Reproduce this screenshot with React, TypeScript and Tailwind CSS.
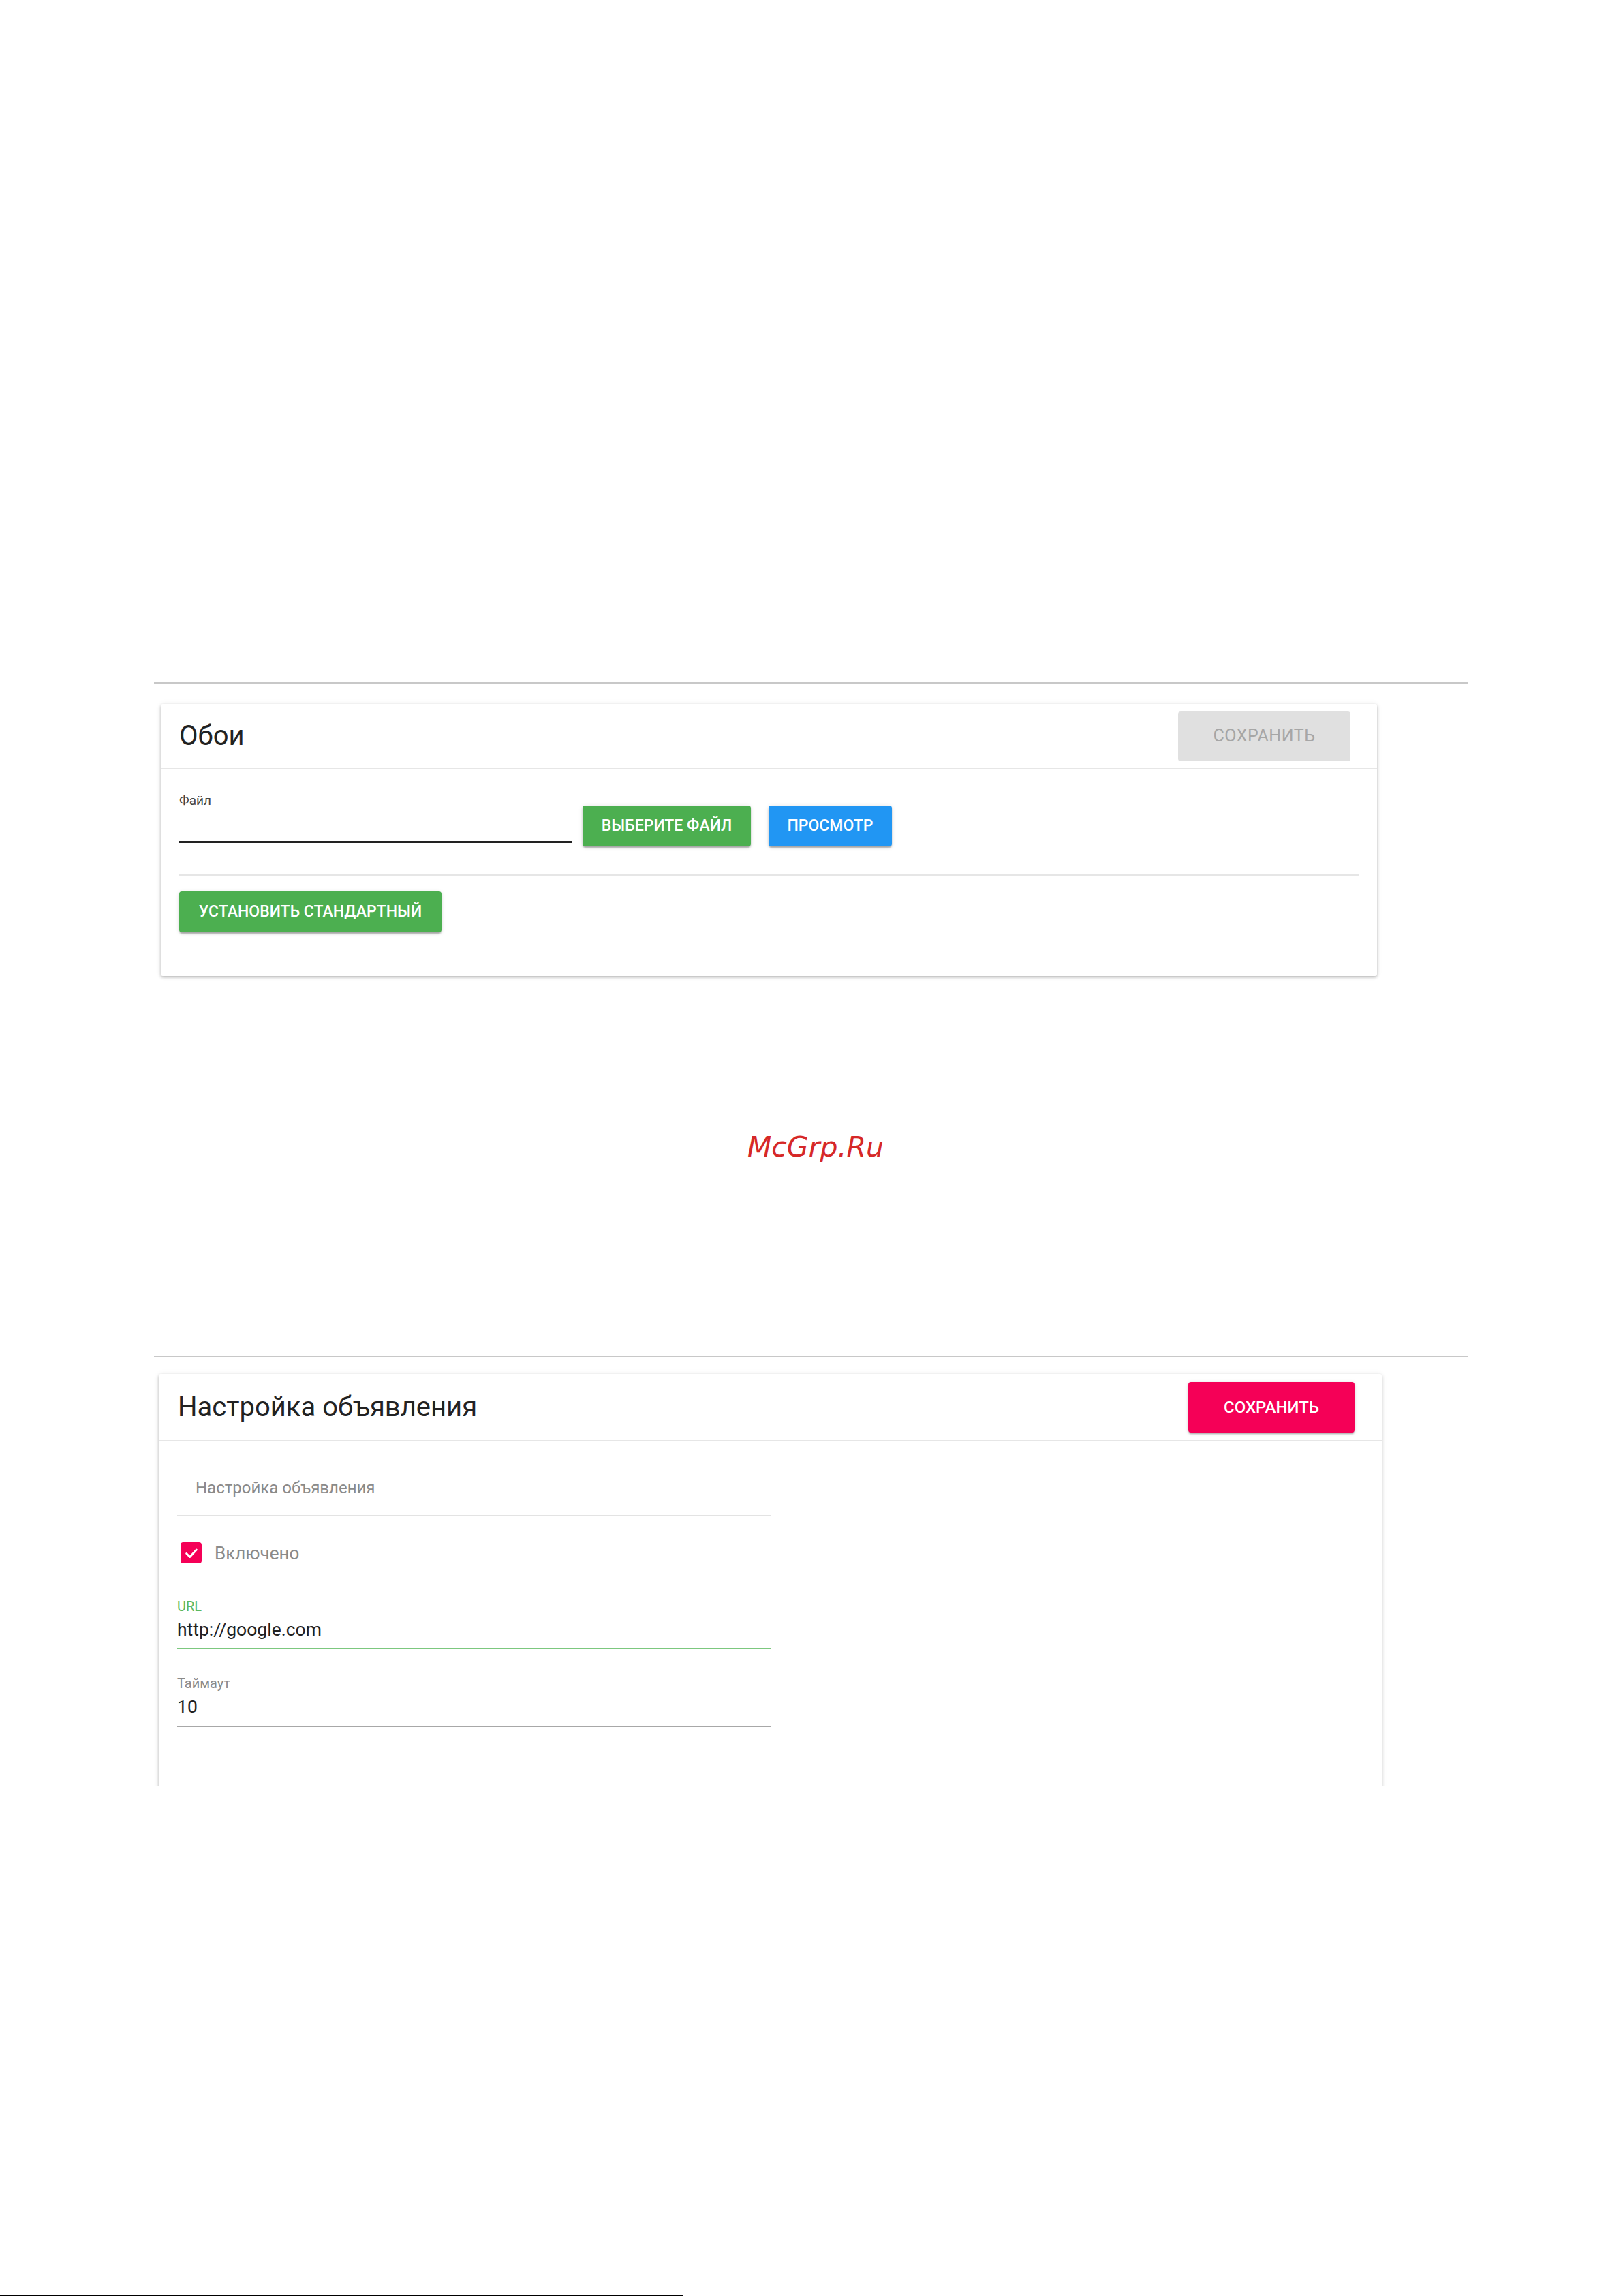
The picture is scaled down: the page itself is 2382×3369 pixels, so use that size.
import React from "react";

const btnShadow =
  "shadow-[0_3px_2px_-1px_rgba(0,0,0,0.2),0_2px_3px_rgba(0,0,0,0.14),0_1px_6px_rgba(0,0,0,0.12)]";

function Card1() {
  return (
    <div className="ml-[236px] mt-[30px] w-[1785px] h-[400px] bg-white rounded-[3px] shadow-[0_2px_4px_rgba(0,0,0,0.25),0_0_10px_rgba(0,0,0,0.06)] flex flex-col">
      <div className="h-[96px] border-b-2 border-[#e6e6e6] flex items-center justify-between pl-[27px] pr-[39px]">
        <div className="text-[40px] leading-none text-[#222] font-normal">Обои</div>
        <div className="w-[253px] h-[73px] rounded-[4px] bg-[#e0e0e0] text-[#a6a6a6] text-[25px] flex items-center justify-center tracking-[0.02em]">
          СОХРАНИТЬ
        </div>
      </div>
      <div className="px-[27px] pt-[36px] flex flex-col">
        <div className="flex items-start">
          <div className="w-[576px] flex flex-col">
            <div className="text-[19px] leading-[19px] text-[#444]">Файл</div>
            <div className="mt-[50px] h-[3px] bg-[#222]" />
          </div>
          <div
            className={`ml-[16px] mt-[17px] w-[247px] h-[60px] rounded-[4px] bg-[#4caf50] text-white font-medium text-[23px] flex items-center justify-center ${btnShadow}`}
          >
            ВЫБЕРИТЕ ФАЙЛ
          </div>
          <div
            className={`ml-[26px] mt-[17px] w-[181px] h-[60px] rounded-[4px] bg-[#2196f3] text-white font-medium text-[23px] flex items-center justify-center ${btnShadow}`}
          >
            ПРОСМОТР
          </div>
        </div>
        <div className="mt-[41px] h-[2px] bg-[#e6e6e6]" />
        <div
          className={`mt-[23px] w-[385px] h-[60px] rounded-[4px] bg-[#4caf50] text-white font-medium text-[23px] flex items-center justify-center ${btnShadow}`}
        >
          УСТАНОВИТЬ СТАНДАРТНЫЙ
        </div>
      </div>
    </div>
  );
}

function Card2() {
  return (
    <div className="mt-[15px] h-[615px] overflow-hidden pt-[10px] pl-[233px] w-[2060px]">
      <div className="w-[1795px] h-[700px] bg-white rounded-[3px] shadow-[0_2px_4px_rgba(0,0,0,0.25),0_0_10px_rgba(0,0,0,0.06)] flex flex-col">
        <div className="h-[99px] border-b-2 border-[#e6e6e6] flex items-center justify-between pl-[28px] pr-[40px]">
          <div className="text-[40px] leading-none text-[#222]">Настройка объявления</div>
          <div
            className={`w-[244px] h-[74px] rounded-[4px] bg-[#f50057] text-white font-medium text-[24px] flex items-center justify-center ${btnShadow}`}
          >
            СОХРАНИТЬ
          </div>
        </div>
        <div className="pl-[27px] flex flex-col w-[898px]">
          <div className="mt-[56px] pl-[27px] text-[24px] leading-[24px] text-[#8a8a8a]">
            Настройка объявления
          </div>
          <div className="mt-[28px] h-[2px] bg-[#e3e3e3]" />
          <div className="mt-[37px] h-[33px] flex items-center">
            <div className="ml-[5px] w-[31px] h-[31px] rounded-[4px] bg-[#f50057] flex items-center justify-center">
              <svg width="22" height="22" viewBox="0 0 24 24">
                <polyline
                  points="4,12.5 9.5,18 20,6.5"
                  fill="none"
                  stroke="white"
                  strokeWidth="3.2"
                  strokeLinecap="round"
                  strokeLinejoin="round"
                />
              </svg>
            </div>
            <div className="ml-[19px] text-[26px] leading-none text-[#8a8a8a]">Включено</div>
          </div>
          <div className="mt-[52px] text-[20px] leading-[20px] text-[#5cb860]">URL</div>
          <div className="mt-[9px] text-[26.5px] leading-[30px] text-[#222]">http://google.com</div>
          <div className="mt-[12px] h-[2px] bg-[#7cc87f]" />
          <div className="mt-[40px] text-[20px] leading-[20px] text-[#8a8a8a]">Таймаут</div>
          <div className="mt-[9px] text-[26.5px] leading-[30px] text-[#222]">10</div>
          <div className="mt-[13px] h-[2px] bg-[#a8a8a8]" />
        </div>
      </div>
    </div>
  );
}

export default function App() {
  return (
    <div
      className="w-[2382px] h-[3369px] bg-white flex flex-col overflow-hidden"
      style={{ fontFamily: "Roboto, 'Noto Sans', sans-serif" }}
    >
      <div className="mt-[1001px] ml-[226px] w-[1928px] h-[2px] bg-[#c8c8c8]" />
      <Card1 />
      <div
        className="mt-[231px] pl-[12px] text-center text-[41px] leading-[41px] italic text-[#d62828]"
        style={{ fontFamily: "'DejaVu Sans', sans-serif" }}
      >
        McGrp.Ru
      </div>
      <div className="mt-[285px] ml-[226px] w-[1928px] h-[2px] bg-[#c8c8c8]" />
      <Card2 />
      <div className="mt-[747px] w-[1003px] h-[2px] bg-black" />
    </div>
  );
}
